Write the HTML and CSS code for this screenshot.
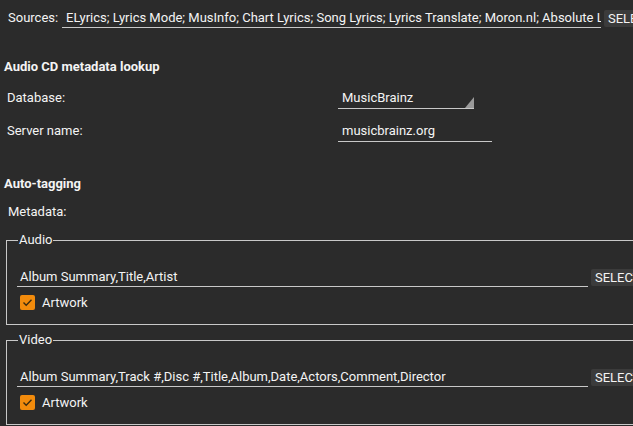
FILE: index.html
```
<!DOCTYPE html>
<html>
<head>
<meta charset="utf-8">
<link rel="stylesheet" href="styles.css">
</head>
<body>
<div class="page">
  <div class="sources-row">
    <span class="sources-label">Sources:</span>
    <div class="field sources-field">ELyrics; Lyrics Mode; MusInfo; Chart Lyrics; Song Lyrics; Lyrics Translate; Moron.nl; Absolute Lyrics; Lyrics.com</div>
    <span class="btn">SELECT</span>
  </div>

  <div class="heading heading-cd">Audio CD metadata lookup</div>
  <div class="cd-grid">
    <span class="row-label">Database:</span>
    <div class="field select-field">MusicBrainz
      <svg class="tri" width="9" height="11" viewBox="0 0 9 11"><polygon points="9,0 9,11 0,11" fill="#9a9a9a"/></svg>
    </div>
    <span class="row-label">Server name:</span>
    <div class="field server-field">musicbrainz.org</div>
  </div>

  <div class="heading heading-auto">Auto-tagging</div>
  <div class="meta-label">Metadata:</div>

  <fieldset class="group group-audio">
    <legend>Audio</legend>
    <div class="field-row">
      <div class="field group-field">Album Summary,Title,Artist</div>
      <span class="btn">SELECT</span>
    </div>
    <div class="check-row">
      <span class="check"><svg width="15" height="15" viewBox="0 0 15 15"><polyline points="3.5,7.5 6.2,10.2 11.5,4.8" fill="none" stroke="#3a2a10" stroke-width="1.4"/></svg></span>
      <span class="check-text">Artwork</span>
    </div>
  </fieldset>

  <fieldset class="group group-video">
    <legend>Video</legend>
    <div class="field-row">
      <div class="field group-field">Album Summary,Track #,Disc #,Title,Album,Date,Actors,Comment,Director</div>
      <span class="btn">SELECT</span>
    </div>
    <div class="check-row">
      <span class="check"><svg width="15" height="15" viewBox="0 0 15 15"><polyline points="3.5,7.5 6.2,10.2 11.5,4.8" fill="none" stroke="#3a2a10" stroke-width="1.4"/></svg></span>
      <span class="check-text">Artwork</span>
    </div>
  </fieldset>
</div>
</body>
</html>
```
FILE: styles.css
```
html, body {
  margin: 0;
  padding: 0;
  background: #2b2b2b;
  overflow: hidden;
}
body {
  font-family: Roboto, "Liberation Sans", sans-serif;
  font-size: 13px;
  color: #f4f4f4;
}
.page {
  width: 720px;
}
.sources-row {
  display: flex;
  align-items: flex-end;
  margin-top: 8px;
  height: 20px;
}
.sources-label {
  width: 54px;
  padding-left: 8px;
  line-height: 20px;
  align-self: flex-start;
}
.field {
  box-sizing: border-box;
  height: 20px;
  line-height: 19px;
  border-bottom: 1px solid #c8c8c8;
  white-space: nowrap;
  overflow: hidden;
  padding-left: 4px;
}
.sources-field {
  width: 539px;
}
.btn {
  display: inline-block;
  box-sizing: border-box;
  background: #3b3b3b;
  border-radius: 2px;
  height: 17px;
  line-height: 17px;
  padding: 0 4px;
  margin-left: 3px;
  margin-bottom: 1px;
  color: #f4f4f4;
}
.heading {
  font-weight: bold;
  font-size: 13px;
  line-height: 14px;
  padding-left: 4px;
}
.heading-cd {
  margin-top: 32px;
}
.cd-grid {
  display: grid;
  grid-template-columns: 331px auto;
  row-gap: 11px;
  margin-top: 13px;
  padding-left: 7px;
  justify-items: start;
}
.row-label {
  line-height: 22px;
}
.select-field {
  position: relative;
  width: 136px;
  height: 22px;
  line-height: 21px;
}
.tri {
  position: absolute;
  right: 0;
  bottom: 0;
}
.server-field {
  width: 154px;
  height: 22px;
  line-height: 21px;
}
.heading-auto {
  margin-top: 35px;
}
.meta-label {
  padding-left: 8px;
  line-height: 16px;
  margin-top: 13px;
}
.group {
  margin: 12px 0 0 6px;
  padding: 0 0 14px 10px;
  border: 1px solid #c8c8c8;
  border-right: none;
  min-width: 0;
}
.group legend {
  padding: 0 1px;
  margin-left: 1px;
  line-height: 16px;
}
.group-video {
  margin-top: 7px;
}
.field-row {
  display: flex;
  align-items: flex-end;
  margin-top: 19px;
  height: 20px;
}
.group-field {
  width: 571px;
  padding-left: 3px;
}
.check-row {
  display: flex;
  align-items: center;
  margin-top: 8px;
  height: 15px;
  padding-left: 3px;
}
.check {
  width: 15px;
  height: 15px;
  background: #f28b0c;
  border-radius: 2px;
  display: block;
}
.check svg {
  display: block;
}
.check-text {
  margin-left: 7px;
}
```
